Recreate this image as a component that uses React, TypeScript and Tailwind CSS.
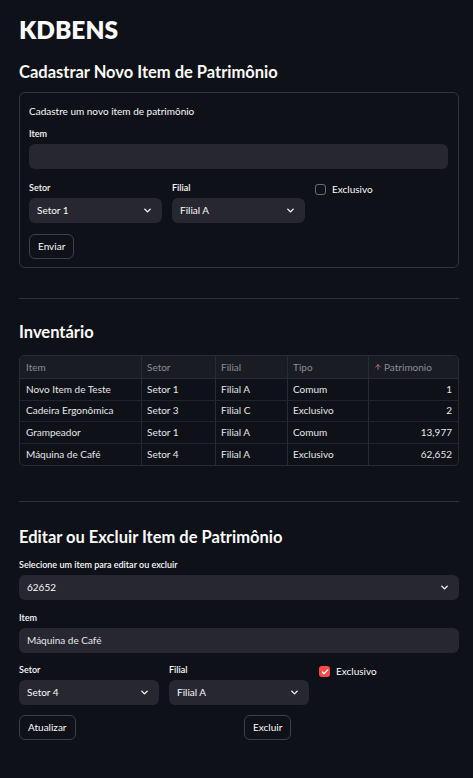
import { ChevronDown, ArrowUp, Check } from "lucide-react";

const rows = [
  { item: "Novo Item de Teste", setor: "Setor 1", filial: "Filial A", tipo: "Comum", pat: "1" },
  { item: "Cadeira Ergonômica", setor: "Setor 3", filial: "Filial C", tipo: "Exclusivo", pat: "2" },
  { item: "Grampeador", setor: "Setor 1", filial: "Filial A", tipo: "Comum", pat: "13,977" },
  { item: "Máquina de Café", setor: "Setor 4", filial: "Filial A", tipo: "Exclusivo", pat: "62,652" },
];

function Label({ children }: { children: React.ReactNode }) {
  return <div className="text-[9px] font-semibold text-[#fafafa] mb-[4px] leading-[12px]">{children}</div>;
}

function Select({ value }: { value: string }) {
  return (
    <div className="h-[25px] rounded-[6px] bg-[#262730] flex items-center justify-between pl-[8px] pr-[9px] text-[10px] text-[#fafafa]">
      <span>{value}</span>
      <ChevronDown size={11} strokeWidth={3} />
    </div>
  );
}

function Checkbox({ checked }: { checked?: boolean }) {
  return (
    <div className="flex items-start gap-[6px] pt-[1px] text-[10px] text-[#fafafa]">
      {checked ? (
        <div className="mt-[1px] w-[11px] h-[11px] rounded-[3px] bg-[#ff4b4b] flex items-center justify-center">
          <Check size={8} strokeWidth={4} color="#fff" />
        </div>
      ) : (
        <div className="mt-[1px] w-[11px] h-[11px] rounded-[3px] border border-[#6b6d76]" />
      )}
      <span className="leading-[13px]">Exclusivo</span>
    </div>
  );
}

function Button({ children }: { children: React.ReactNode }) {
  return (
    <div className="inline-flex h-[25px] items-center px-[8px] rounded-[6px] border border-[#3d4048] text-[10px] text-[#fafafa]">
      {children}
    </div>
  );
}

export default function App() {
  return (
    <div className="min-h-[778px] bg-[#0e1117] text-[#fafafa] pl-[19px] pr-[14px] pt-[14px] pb-[38px]" style={{ fontFamily: "Lato, 'Noto Sans', sans-serif" }}>
      <h1 className="text-[24.5px] font-extrabold leading-[32px]">KDBENS</h1>
      <h2 className="text-[16.5px] font-bold leading-[24px] mt-[14px]">Cadastrar Novo Item de Patrimônio</h2>

      {/* form */}
      <div className="mt-[8px] border border-[#34363e] rounded-[6px] pl-[9px] pr-[10px] pt-[11px] pb-[8px]">
        <div className="text-[10px] leading-[14px]">Cadastre um novo item de patrimônio</div>
        <div className="mt-[10px]">
          <Label>Item</Label>
          <div className="h-[25px] rounded-[6px] bg-[#262730]" />
        </div>
        <div className="grid grid-cols-3 gap-[10px] mt-[13px]">
          <div>
            <Label>Setor</Label>
            <Select value="Setor 1" />
          </div>
          <div>
            <Label>Filial</Label>
            <Select value="Filial A" />
          </div>
          <Checkbox />
        </div>
        <div className="mt-[9px]">
          <Button>Enviar</Button>
        </div>
      </div>

      <div className="h-px bg-[#2f3139] mt-[30px]" />

      <h2 className="text-[16.5px] font-bold leading-[24px] mt-[21px]">Inventário</h2>

      <div className="mt-[11px] border border-[#2a2c34] rounded-[5px] overflow-hidden text-[10px]">
        <div className="grid grid-cols-[122px_74px_72px_81px_1fr] h-[23px] bg-[#1a1c23] text-[#8b8d95] border-b border-[#2a2c34]">
          <div className="px-[6px] flex items-center border-r border-[#2a2c34]">Item</div>
          <div className="px-[5px] flex items-center border-r border-[#2a2c34]">Setor</div>
          <div className="px-[5px] flex items-center border-r border-[#2a2c34]">Filial</div>
          <div className="px-[5px] flex items-center border-r border-[#2a2c34]">Tipo</div>
          <div className="px-[5px] flex items-center gap-[2px]">
            <ArrowUp size={8} strokeWidth={2.5} color="#d07a7a" />
            Patrimonio
          </div>
        </div>
        {rows.map((r, i) => (
          <div key={r.item} className={`grid grid-cols-[122px_74px_72px_81px_1fr] h-[21.5px] text-[#e6e6e8] ${i < rows.length - 1 ? "border-b border-[#22242b]" : ""}`}>
            <div className="px-[6px] flex items-center border-r border-[#2a2c34]">{r.item}</div>
            <div className="px-[5px] flex items-center border-r border-[#2a2c34]">{r.setor}</div>
            <div className="px-[5px] flex items-center border-r border-[#2a2c34]">{r.filial}</div>
            <div className="px-[5px] flex items-center border-r border-[#2a2c34]">{r.tipo}</div>
            <div className="px-[6px] flex items-center justify-end">{r.pat}</div>
          </div>
        ))}
      </div>

      <div className="h-px bg-[#2f3139] mt-[35px]" />

      <h2 className="text-[16.5px] font-bold leading-[24px] mt-[23px]">Editar ou Excluir Item de Patrimônio</h2>

      <div className="mt-[10px]">
        <Label>Selecione um item para editar ou excluir</Label>
        <Select value="62652" />
      </div>

      <div className="mt-[12px]">
        <Label>Item</Label>
        <div className="h-[25px] rounded-[6px] bg-[#262730] flex items-center px-[8px] text-[10px] text-[#e6e6e8]">Máquina de Café</div>
      </div>

      <div className="grid grid-cols-3 gap-[10px] mt-[11px]">
        <div>
          <Label>Setor</Label>
          <Select value="Setor 4" />
        </div>
        <div>
          <Label>Filial</Label>
          <Select value="Filial A" />
        </div>
        <Checkbox checked />
      </div>

      <div className="grid grid-cols-2 gap-[10px] mt-[8px]">
        <div>
          <Button>Atualizar</Button>
        </div>
        <div>
          <Button>Excluir</Button>
        </div>
      </div>
    </div>
  );
}
